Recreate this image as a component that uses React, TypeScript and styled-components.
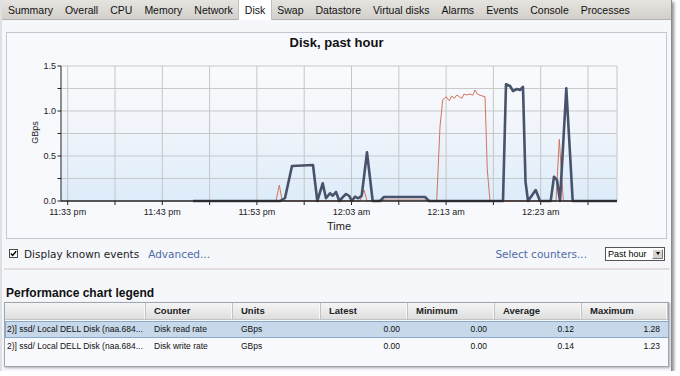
import styled, { createGlobalStyle } from "styled-components";

const GlobalStyle = createGlobalStyle`
  html, body {
    margin: 0;
    padding: 0;
    background: #ffffff;
  }
  body {
    font-family: "Liberation Sans", Arial, sans-serif;
    color: #000;
  }
`;

const Window = styled.div`
  width: 672px;
  height: 371px;
  box-sizing: border-box;
  background: #f5f7fb;
  border-left: 2px solid #dde0e5;
  border-right: 1px solid #8a8a8a;
  box-shadow: 2px 2px 3px rgba(0, 0, 0, 0.45);
  display: flex;
  flex-direction: column;
  overflow: hidden;
`;

const TabBar = styled.div`
  height: 20px;
  box-sizing: border-box;
  display: flex;
  background: linear-gradient(#e6e4e0, #d3d0cb);
  border-bottom: 1px solid #b1b1b1;
`;

const Tab = styled.div<{ $active?: boolean }>`
  padding: 0 6px;
  height: ${p => (p.$active ? "20px" : "19px")};
  line-height: 20px;
  font-size: 10.5px;
  color: #111;
  white-space: nowrap;
  box-sizing: border-box;
  background: ${p => (p.$active ? "#ffffff" : "transparent")};
  border-left: 1px solid ${p => (p.$active ? "#c0c0c0" : "transparent")};
  border-right: 1px solid ${p => (p.$active ? "#c0c0c0" : "transparent")};
  margin: 0 -1px;
`;

const ChartPanel = styled.div`
  margin: 12px 4px 0 4px;
  height: 207px;
  box-sizing: border-box;
  border: 1px solid #c3c8d0;
  background: #f8f9fd;
  display: flex;
  flex-direction: column;
`;

const ChartTitle = styled.div`
  height: 20px;
  line-height: 20px;
  text-align: center;
  font-weight: bold;
  font-size: 13px;
  color: #111;
`;

const ChartSvg = styled.svg`
  display: block;
  text {
    font-family: "Liberation Sans", Arial, sans-serif;
    font-size: 9px;
    fill: #222;
  }
`;

const ControlsRow = styled.div`
  height: 29px;
  display: flex;
  align-items: center;
  padding: 0 6px 0 7px;
  font-family: "DejaVu Sans", Verdana, sans-serif;
  font-size: 10.5px;
`;

const CheckLabel = styled.label`
  display: flex;
  align-items: center;
  gap: 6px;
  color: #222;
`;

const CheckBox = styled.span`
  width: 9px;
  height: 9px;
  box-sizing: border-box;
  border: 1px solid #4a4a4a;
  background: #fff;
  display: inline-flex;
  align-items: center;
  justify-content: center;
`;

const LinkText = styled.span<{ $gap?: number }>`
  color: #4f6ba6;
  margin-left: ${p => p.$gap ?? 0}px;
`;

const Spacer = styled.div`
  flex: 1;
`;

const Select = styled.div`
  width: 60px;
  height: 14px;
  margin-left: 18px;
  box-sizing: border-box;
  border: 1px solid #555;
  background: #fff;
  display: flex;
  align-items: center;
  justify-content: space-between;
  padding-left: 2px;
  font-family: "Liberation Sans", Arial, sans-serif;
  font-size: 9px;
  color: #000;
`;

const SelectButton = styled.span`
  width: 11px;
  height: 10px;
  margin-right: 1px;
  box-sizing: border-box;
  background: #d6d3ce;
  border: 1px solid;
  border-color: #fff #7a7a7a #7a7a7a #fff;
  display: flex;
  align-items: center;
  justify-content: center;
  &::after {
    content: "";
    border-left: 2.5px solid transparent;
    border-right: 2.5px solid transparent;
    border-top: 3px solid #000;
  }
`;

const Divider = styled.div`
  height: 2px;
  margin: 0 1px 0 2px;
  background: repeating-linear-gradient(90deg, #ddd3d3 0 1px, #ece8e8 1px 2px);
`;

const LegendTitle = styled.div`
  margin-top: 16px;
  padding-left: 4px;
  line-height: 14px;
  font-size: 12px;
  font-weight: bold;
  color: #111;
`;

const Table = styled.div`
  margin: 2px 0 0 2px;
  width: 665px;
  height: 65px;
  box-sizing: border-box;
  border: 1px solid #9ea6b0;
  background: #f8f9fc;
  box-shadow: 1px 1px 2px rgba(0, 0, 0, 0.3);
`;

const columns = "141px 87px 88px 87px 87px 87px 86px";

const HeaderRow = styled.div`
  display: grid;
  grid-template-columns: ${columns};
  height: 17px;
  background: linear-gradient(#f5f5f5, #dedede);
  border-bottom: 1px solid #c4c4c4;
  box-sizing: border-box;
`;

const HeaderCell = styled.div`
  padding-left: 8px;
  line-height: 16px;
  font-size: 9.5px;
  font-weight: bold;
  color: #222;
  border-right: 1px solid #c2c2c2;
  box-shadow: inset -1px 0 0 #f8f8f8;
`;

const Row = styled.div<{ $selected?: boolean }>`
  display: grid;
  grid-template-columns: ${columns};
  height: 17px;
  box-sizing: border-box;
  margin-top: ${p => (p.$selected ? "1px" : "0")};
  background: ${p => (p.$selected ? "#c6d8e9" : "transparent")};
  border: 1px solid ${p => (p.$selected ? "#86a9cc" : "transparent")};
  margin-right: -1px;
`;

const Cell = styled.div<{ $num?: boolean; $first?: boolean }>`
  padding: ${p => (p.$num ? "0 9px 0 0" : p.$first ? "0 0 0 1px" : "0 0 0 7px")};
  text-align: ${p => (p.$num ? "right" : "left")};
  line-height: 15px;
  font-size: 8.5px;
  color: #111;
  white-space: nowrap;
  overflow: hidden;
`;

const tabs = [
  "Summary", "Overall", "CPU", "Memory", "Network", "Disk", "Swap",
  "Datastore", "Virtual disks", "Alarms", "Events", "Console", "Processes",
];

const xTicks = Array.from({ length: 12 }, (_, k) => 67.7 + k * 47.3);
const xLabels = ["11:33 pm", "11:43 pm", "11:53 pm", "12:03 am", "12:13 am", "12:23 am"];
const yGrid = [66, 88.5, 111, 133.5, 156, 178.5, 201];
const yLabels = [
  { y: 66, t: "1.5" },
  { y: 111, t: "1.0" },
  { y: 156, t: "0.5" },
  { y: 201, t: "0.0" },
];

const readRate: [number, number][] = [
  [193, 201], [280, 201], [285, 198], [292, 166], [313, 165], [317.3, 201],
  [322.7, 183.3], [326, 198.3], [330, 193.3], [332.7, 195.7], [336, 192],
  [339.3, 201], [343.3, 196.7], [346, 194], [349.3, 196], [351.7, 201],
  [355, 196.7], [358.3, 198.3], [361.7, 195.7], [367, 152.3], [372.7, 201],
  [380, 201], [384, 197], [425, 197], [429, 201], [503, 201], [506, 84.3],
  [510, 86], [513, 91], [517, 89], [520, 90], [523, 87], [525.5, 181.7],
  [528, 201], [535.7, 190], [540, 201], [550.7, 201], [554, 176.7],
  [557, 180], [560, 201], [566.3, 88.3], [572.7, 201], [617, 201],
];

const writeRate: [number, number][] = [
  [193, 201], [276, 201], [279.3, 185], [282, 200], [287, 201], [360, 201],
  [364, 190], [367, 201], [384, 200], [425, 200], [436.7, 201], [440, 126.7],
  [442.7, 100], [446, 96.7], [449.3, 100.7], [451.7, 96], [454.3, 98.3],
  [456.7, 95], [459.3, 96.7], [462, 98.3], [464, 94], [466.7, 95], [470, 94],
  [472.7, 95.3], [475, 90], [477.3, 94], [480, 95.3], [485, 96.7],
  [487.3, 170], [490, 201], [556, 201], [559.3, 139.3], [563.3, 201], [617, 201],
];

const toPath = (pts: [number, number][]) =>
  pts.map(([x, y], i) => `${i ? "L" : "M"}${x} ${y}`).join(" ");

const rows = [
  { name: "2)] ssd/ Local DELL Disk (naa.684...", counter: "Disk read rate", latest: "0.00", min: "0.00", avg: "0.12", max: "1.28" },
  { name: "2)] ssd/ Local DELL Disk (naa.684...", counter: "Disk write rate", latest: "0.00", min: "0.00", avg: "0.14", max: "1.23" },
];

function Chart() {
  return (
    <ChartSvg width={659} height={185} viewBox="7 53 659 185">
      <defs>
        <linearGradient id="plotBg" x1="0" y1="0" x2="0" y2="1">
          <stop offset="0" stopColor="#fafbfd" />
          <stop offset="0.45" stopColor="#f1f5fb" />
          <stop offset="1" stopColor="#dcecf9" />
        </linearGradient>
      </defs>
      <rect x={61} y={66} width={556} height={135} fill="url(#plotBg)" />
      {yGrid.slice(0, 6).map(y => (
        <line key={y} x1={61} x2={617} y1={y} y2={y} stroke="#c9c9c9" strokeWidth={1} />
      ))}
      {xTicks.map(x => (
        <line key={x} x1={x} x2={x} y1={66} y2={201} stroke="#c6c6c6" strokeWidth={1} />
      ))}
      <line x1={617} x2={617} y1={66} y2={201} stroke="#c6c6c6" strokeWidth={1} />
      {yGrid.map(y => (
        <line key={`t${y}`} x1={57.5} x2={61} y1={y} y2={y} stroke="#222" strokeWidth={1} />
      ))}
      {xTicks.map(x => (
        <line key={`xt${x}`} x1={x} x2={x} y1={201} y2={205} stroke="#222" strokeWidth={1} />
      ))}
      <path d={toPath(writeRate)} fill="none" stroke="#d4735f" strokeWidth={1} strokeLinejoin="round" />
      <path d={toPath(readRate)} fill="none" stroke="#48526a" strokeWidth={2.6} strokeLinejoin="round" />
      <line x1={61} x2={61} y1={66} y2={201} stroke="#222" strokeWidth={1} />
      <line x1={61} x2={617} y1={201} y2={201} stroke="#222" strokeWidth={1.5} />
      {yLabels.map(l => (
        <text key={l.t} x={56} y={l.y + 3} textAnchor="end">{l.t}</text>
      ))}
      {xLabels.map((t, i) => (
        <text key={t} x={xTicks[i * 2]} y={215} textAnchor="middle">{t}</text>
      ))}
      <text x={38} y={132.5} textAnchor="middle" transform="rotate(-90 38 132.5)">GBps</text>
      <text x={339} y={230} textAnchor="middle" style={{ fontSize: 11 }}>Time</text>
    </ChartSvg>
  );
}

export default function App() {
  return (
    <>
      <GlobalStyle />
      <Window>
        <TabBar>
          {tabs.map(t => (
            <Tab key={t} $active={t === "Disk"}>{t}</Tab>
          ))}
        </TabBar>
        <ChartPanel>
          <ChartTitle>Disk, past hour</ChartTitle>
          <Chart />
        </ChartPanel>
        <ControlsRow>
          <CheckLabel>
            <CheckBox>
              <svg width="7" height="7" viewBox="0 0 7 7">
                <path d="M0.8 3.4 L2.7 5.4 L6.2 1.2" fill="none" stroke="#000" strokeWidth={1.4} />
              </svg>
            </CheckBox>
            Display known events
          </CheckLabel>
          <LinkText $gap={9}>Advanced...</LinkText>
          <Spacer />
          <LinkText>Select counters...</LinkText>
          <Select>
            Past hour
            <SelectButton />
          </Select>
        </ControlsRow>
        <Divider />
        <LegendTitle>Performance chart legend</LegendTitle>
        <Table>
          <HeaderRow>
            <HeaderCell />
            <HeaderCell>Counter</HeaderCell>
            <HeaderCell>Units</HeaderCell>
            <HeaderCell>Latest</HeaderCell>
            <HeaderCell>Minimum</HeaderCell>
            <HeaderCell>Average</HeaderCell>
            <HeaderCell>Maximum</HeaderCell>
          </HeaderRow>
          {rows.map((r, i) => (
            <Row key={r.counter} $selected={i === 0}>
              <Cell $first>{r.name}</Cell>
              <Cell>{r.counter}</Cell>
              <Cell>GBps</Cell>
              <Cell $num>{r.latest}</Cell>
              <Cell $num>{r.min}</Cell>
              <Cell $num>{r.avg}</Cell>
              <Cell $num>{r.max}</Cell>
            </Row>
          ))}
        </Table>
      </Window>
    </>
  );
}
